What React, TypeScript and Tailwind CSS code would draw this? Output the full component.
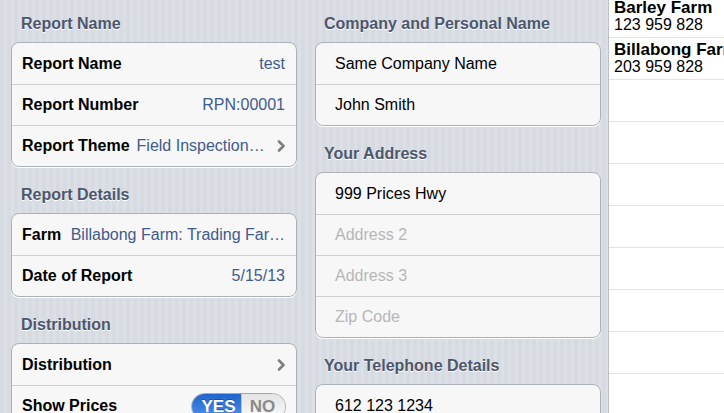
import React from "react";

function Header({ children, first }: { children: React.ReactNode; first?: boolean }) {
  return (
    <div
      className={
        first
          ? "flex h-[42px] shrink-0 items-end pb-[9px] pl-[10px] text-[16px] font-bold leading-[18px] text-[#4c566c] [text-shadow:0_1px_0_#ffffff]"
          : "flex h-[46px] shrink-0 items-end pb-[9px] pl-[10px] text-[16px] font-bold leading-[18px] text-[#4c566c] [text-shadow:0_1px_0_#ffffff]"
      }
    >
      {children}
    </div>
  );
}

function Card({ children }: { children: React.ReactNode }) {
  return (
    <div className="shrink-0 overflow-hidden rounded-[8px] border border-[#abb1b9] bg-[#f7f7f7] shadow-[0_1px_0_#ffffff]">
      {children}
    </div>
  );
}

function Row({ children, wide }: { children: React.ReactNode; wide?: boolean }) {
  return (
    <div
      className={
        wide
          ? "flex h-[41px] shrink-0 items-center border-t border-[#cfcfcf] pl-[19px] pr-[10px] text-[16px] first:border-t-0"
          : "flex h-[41px] shrink-0 items-center border-t border-[#cfcfcf] pl-[10px] pr-[11px] text-[16px] first:border-t-0"
      }
    >
      {children}
    </div>
  );
}

function Chevron() {
  return (
    <svg width="9" height="12" viewBox="0 0 9 12" className="ml-[12px] shrink-0">
      <polyline points="2,1.5 6.5,6 2,10.5" fill="none" stroke="#7f7f7f" strokeWidth="2.6" strokeLinecap="round" strokeLinejoin="round" />
    </svg>
  );
}

function Toggle() {
  return (
    <div className="ml-auto flex h-[27px] w-[95px] overflow-hidden rounded-[14px] border border-[#a6a6a6] text-[17px] font-bold leading-none">
      <div className="flex w-[49px] items-center justify-center bg-gradient-to-b from-[#2164cc] to-[#4d93ec] pl-[4px] text-white [text-shadow:0_-1px_0_#1a4f9e]">
        YES
      </div>
      <div className="flex flex-1 items-center justify-center border-l border-[#c4c4c4] bg-gradient-to-b from-[#e4e4e4] to-[#fbfbfb] pr-[2px] text-[#8a8a8a]">
        NO
      </div>
    </div>
  );
}

const farms = [
  { name: "Barley Farm", phone: "123 959 828" },
  { name: "Billabong Farm", phone: "203 959 828" },
  { name: "", phone: "" },
  { name: "", phone: "" },
  { name: "", phone: "" },
  { name: "", phone: "" },
  { name: "", phone: "" },
  { name: "", phone: "" },
  { name: "", phone: "" },
  { name: "", phone: "" },
];

export default function App() {
  return (
    <div className="flex h-[413px] w-[724px] overflow-hidden font-['Liberation_Sans',Arial,Helvetica,sans-serif] text-black">
      <div className="flex h-full w-[609px] shrink-0 gap-[18px] overflow-hidden border-r border-[#bcc1c8] bg-[repeating-linear-gradient(90deg,#d6dae1_0px,#d6dae1_4px,#dcdfe5_4px,#dcdfe5_7px)] pl-[11px]">
        <div className="flex w-[286px] shrink-0 flex-col">
          <Header first>Report Name</Header>
          <Card>
            <Row>
              <span className="font-bold">Report Name</span>
              <span className="ml-auto text-[#3f5b8c]">test</span>
            </Row>
            <Row>
              <span className="font-bold">Report Number</span>
              <span className="ml-auto text-[#3f5b8c]">RPN:00001</span>
            </Row>
            <Row>
              <span className="shrink-0 font-bold">Report Theme</span>
              <span className="ml-[7px] min-w-0 flex-1 truncate whitespace-nowrap text-[#3f5b8c]">Field Inspection…</span>
              <span className="-mr-[1px] flex">
                <Chevron />
              </span>
            </Row>
          </Card>

          <Header>Report Details</Header>
          <Card>
            <Row>
              <span className="shrink-0 font-bold">Farm</span>
              <span className="ml-[9px] min-w-0 flex-1 truncate whitespace-nowrap text-right text-[#3f5b8c]">
                Billabong Farm: Trading Far…
              </span>
            </Row>
            <Row>
              <span className="font-bold">Date of Report</span>
              <span className="ml-auto text-[#3f5b8c]">5/15/13</span>
            </Row>
          </Card>

          <Header>Distribution</Header>
          <Card>
            <Row>
              <span className="font-bold">Distribution</span>
              <span className="-mr-[1px] ml-auto flex">
                <Chevron />
              </span>
            </Row>
            <Row>
              <span className="font-bold">Show Prices</span>
              <span className="-mr-[1px] ml-auto flex">
                <Toggle />
              </span>
            </Row>
          </Card>
        </div>

        <div className="flex w-[286px] shrink-0 flex-col">
          <Header first>
            <span className="-ml-[1px]">Company and Personal Name</span>
          </Header>
          <Card>
            <Row wide>Same Company Name</Row>
            <Row wide>John Smith</Row>
          </Card>

          <Header>
            <span className="-ml-[1px]">Your Address</span>
          </Header>
          <Card>
            <Row wide>999 Prices Hwy</Row>
            <Row wide>
              <span className="text-[#b6b6b6]">Address 2</span>
            </Row>
            <Row wide>
              <span className="text-[#b6b6b6]">Address 3</span>
            </Row>
            <Row wide>
              <span className="text-[#b6b6b6]">Zip Code</span>
            </Row>
          </Card>

          <Header>
            <span className="-ml-[1px]">Your Telephone Details</span>
          </Header>
          <Card>
            <Row wide>612 123 1234</Row>
          </Card>
        </div>
      </div>

      <div className="min-w-0 flex-1 overflow-hidden bg-white">
        <div className="-mt-[4px] flex flex-col">
          {farms.map((f, i) => (
            <div key={i} className="h-[42px] shrink-0 whitespace-nowrap border-b border-[#e2e2e2] pl-[5px] pt-[2px]">
              <div className="text-[17px] font-bold leading-[20px]">{f.name}</div>
              <div className="text-[16px] leading-[13px]">{f.phone}</div>
            </div>
          ))}
        </div>
      </div>
    </div>
  );
}
